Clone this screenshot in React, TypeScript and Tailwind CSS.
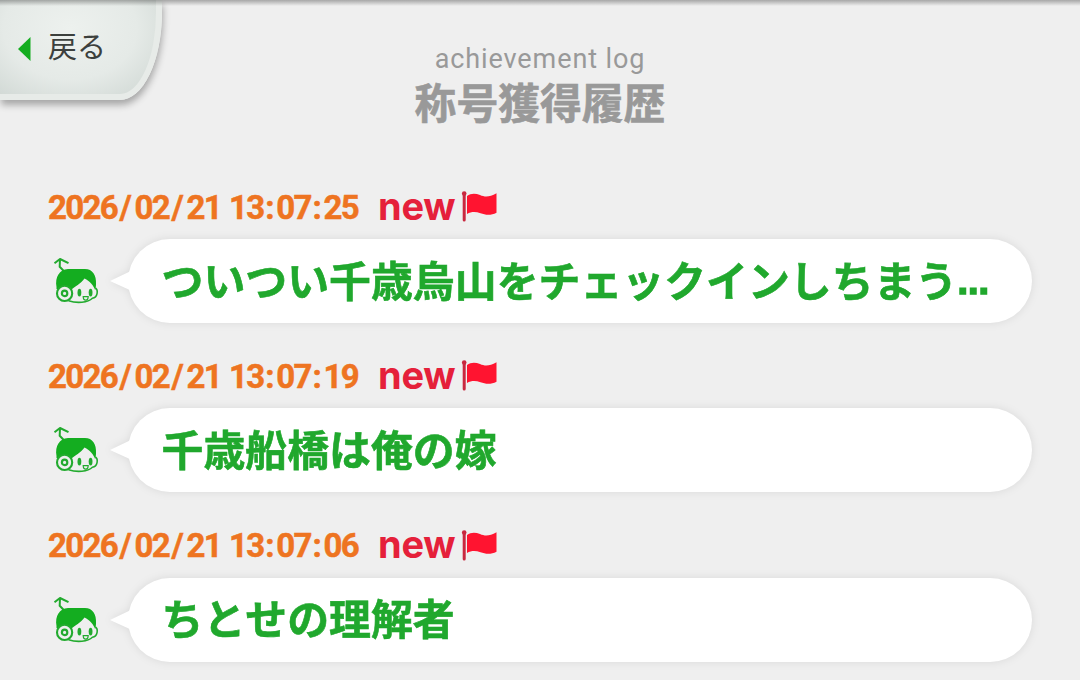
type LogEntry = {
  date: string;
  time: string;
  title: string;
  truncated?: boolean;
};

const ENTRIES: LogEntry[] = [
  { date: "2026/02/21", time: "13:07:25", title: "ついつい千歳烏山をチェックインしちまう", truncated: true },
  { date: "2026/02/21", time: "13:07:19", title: "千歳船橋は俺の嫁" },
  { date: "2026/02/21", time: "13:07:06", title: "ちとせの理解者" },
];

function FlagIcon() {
  return (
    <svg width="36" height="33" viewBox="0 0 36 33" fill="none">
      <path d="M3.2 3v26" stroke="#c9283f" strokeWidth="3" strokeLinecap="round" />
      <circle cx="3.2" cy="2.6" r="2.3" fill="#c9283f" />
      <path
        d="M6 5C10 2 14.5 2.1 19 4.1c5 2.2 9.5 2.2 16.5-1.8v19.4c-5.5 3-11 2.4-16 .6-5-1.8-9-1.8-13.5.7Z"
        fill="#ff1430"
      />
    </svg>
  );
}

function FaceIcon() {
  return (
    <svg width="46" height="48" viewBox="0 0 46 48" fill="none">
      {/* Antenna */}
      <path
        d="M1.5 6.3 7 2l8.5 4.2M7 2.2l-.3 7.5 4.3 4.5"
        stroke="#22aa2e"
        strokeWidth="2"
        strokeLinejoin="round"
      />
      {/* Face */}
      <path
        d="M42.4 31c3 2 2.4 9.6-3 10.2C34.8 45.8 24 46.5 15.5 43.8"
        stroke="#22aa2e"
        strokeWidth="1.6"
      />
      {/* Hair */}
      <path
        d="M3.5 30C1.8 20 6.5 12.5 15 12h17c7.5 0 11.6 6 11 15.5-.1 2.5-.3 3.8-.9 5.5-1.5-4.2-5.4-9-10.6-11.4C28 26.5 21.5 30 18 33L3.5 32Z"
        fill="#14ad20"
      />
      {/* Headphone */}
      <circle cx="11.6" cy="36.4" r="7.6" fill="#efefef" stroke="#22aa2e" strokeWidth="2.1" />
      <circle cx="11.6" cy="36.4" r="2.7" stroke="#22aa2e" strokeWidth="2.2" />
      <ellipse cx="26.4" cy="35.6" rx="1.9" ry="3.9" fill="#22aa2e" />
      <ellipse cx="37.6" cy="35.6" rx="1.9" ry="3.9" fill="#22aa2e" />
      <path
        d="M30.2 39.6h5c0 2-1.2 3.6-2.5 3.6s-2.5-1.6-2.5-3.6Z"
        stroke="#22aa2e"
        strokeWidth="1.2"
      />
    </svg>
  );
}

function Stamp({ value, className }: { value: string; className: string }) {
  return (
    <span className={className}>
      {value.split(/([/:])/).map((part, i) => (
        <span
          key={i}
          className={
            part === "/"
              ? "inline-block w-[17.5px] text-center tracking-normal"
              : part === ":"
                ? "inline-block w-[12.8px] text-center tracking-normal"
                : ""
          }
        >
          {part}
        </span>
      ))}
    </span>
  );
}

function EntryRow({ entry }: { entry: LogEntry }) {
  return (
    <li className="h-[169.4px]">
      <div className="flex h-[53px] items-center pb-[10px] pl-[48px] font-[Roboto,sans-serif] font-bold">
        <Stamp
          value={entry.date}
          className="w-[181px] whitespace-nowrap text-[33px] leading-[40px] tracking-[-1.7px] text-[#ee7421] [-webkit-text-stroke:0.5px_#ee7421]"
        />
        <Stamp
          value={entry.time}
          className="w-[149px] whitespace-nowrap text-[33px] leading-[40px] tracking-[-1.7px] text-[#ee7421] [-webkit-text-stroke:0.5px_#ee7421]"
        />
        <span className="w-[83px] pb-[4px] font-[Inter,sans-serif] text-[38px] leading-[40px] tracking-[-0.2px] text-[#e5203a]">
          new
        </span>
        <FlagIcon />
      </div>
      <div className="flex h-[84px] items-center">
        <div className="w-[110px] pl-[53px]">
          <FaceIcon />
        </div>
        <div className="flex items-center drop-shadow-[0_0_4px_rgba(0,0,0,0.09)]">
          <svg width="22" height="22" viewBox="0 0 22 22" className="-mr-[4px]">
            <path d="M0 11 22 .5v20.5Z" fill="#fff" />
          </svg>
          <div className="flex h-[84px] w-[904px] items-center whitespace-nowrap rounded-full bg-white pb-[5px] pl-[33.5px] font-bold leading-[60px] text-[#20a82d]">
            <span className="font-['Noto_Sans_CJK_JP',sans-serif] text-[41.9px] [-webkit-text-stroke:0.6px_#20a82d]">
              {entry.title}
            </span>
            {entry.truncated && (
              <span className="pt-[5px] font-['Liberation_Sans',sans-serif] text-[38px] [-webkit-text-stroke:1.6px_#20a82d]">
                ...
              </span>
            )}
          </div>
        </div>
      </div>
    </li>
  );
}

export default function App() {
  return (
    <div className="relative h-[680px] w-[1080px] overflow-hidden bg-[#efefef]">
      <button
        type="button"
        className="absolute left-0 top-0 flex h-[100px] w-[162px] items-center rounded-br-[42px_88px] border-b-[6px] border-r-[6px] border-[#e7ebe8] bg-[radial-gradient(ellipse_at_45%_30%,#edf1ee_0%,#e5eae7_55%,#ced6d2_100%)] pl-[18px] shadow-[1px_5px_7px_rgba(0,0,0,0.3)]"
      >
        <svg width="13" height="24" viewBox="0 0 13 24" className="mt-[3px]">
          <path d="M0 12 12.5 0v24Z" fill="#14ad20" />
        </svg>
        <span className="ml-[17px] pb-[4px] font-['Noto_Sans_CJK_JP',sans-serif] text-[29px] leading-[36px] text-[#3c403d]">
          戻る
        </span>
      </button>

      <header className="flex h-[181px] flex-col items-center pt-[44px] text-[#999]">
        <p className="font-[Roboto,sans-serif] text-[27px] leading-[30px] tracking-[0.9px]">achievement log</p>
        <h1 className="font-['Noto_Sans_CJK_JP',sans-serif] text-[41.8px] font-bold leading-[54px] [-webkit-text-stroke:0.6px_#999]">
          称号獲得履歴
        </h1>
      </header>

      <ul className="pt-[5px]">
        {ENTRIES.map((entry) => (
          <EntryRow key={entry.time} entry={entry} />
        ))}
      </ul>

      {/* Shade along the top edge */}
      <div className="absolute inset-x-0 top-0 h-[6px] bg-linear-to-b from-black/30 to-transparent" />
    </div>
  );
}
